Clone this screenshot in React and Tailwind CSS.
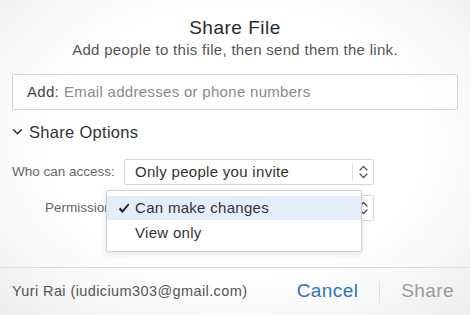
import React from "react";

function Updown({ className = "" }) {
  return (
    <svg width="9" height="14" viewBox="0 0 9 14" className={className} fill="none" stroke="#555" strokeWidth="1.2" strokeLinecap="round" strokeLinejoin="round">
      <path d="M1 5 L4.5 1.5 L8 5" />
      <path d="M1 9 L4.5 12.5 L8 9" />
    </svg>
  );
}

export default function App() {
  return (
    <div
      className="w-[470px] h-[315px] overflow-hidden flex flex-col text-[#333] tracking-[0.3px]"
      style={{
        fontFamily: '"Liberation Sans", Arial, sans-serif',
        background: "radial-gradient(ellipse 75% 80% at 50% 45%, #ffffff 55%, #ececec 100%)",
      }}
    >
      <div className="flex-1 flex flex-col px-3">
        <div className="text-center text-[19px] leading-none mt-[18px] tracking-[0.5px] text-[#2b2b2b]">Share File</div>
        <div className="text-center text-[15px] leading-none mt-[5px] text-[#555]">
          Add people to this file, then send them the link.
        </div>
        <div className="mt-[17px] h-[36px] border border-[#d2d2d2] rounded-[2px] bg-white/60 flex items-center px-[14px] text-[15px]">
          <span className="text-[#444]">Add:</span>
          <span className="ml-[5px] text-[#8a8a8a]">Email addresses or phone numbers</span>
        </div>
        <div className="mt-[12px] flex items-center h-[20px]">
          <svg width="11" height="8" viewBox="0 0 11 8" fill="none" stroke="#333" strokeWidth="1.5" strokeLinecap="round" strokeLinejoin="round">
            <path d="M1.5 1.8 L5.5 5.8 L9.5 1.8" />
          </svg>
          <span className="ml-[6px] text-[16.5px] text-[#333]">Share Options</span>
        </div>
        <div className="mt-[17px] flex items-center">
          <span className="w-[112px] text-[13.5px] text-[#666] tracking-[0px]">Who can access:</span>
          <div className="w-[250px] h-[26px] border border-[#d6d6d6] rounded-[2px] bg-white flex items-center">
            <span className="flex-1 pl-[10px] text-[15px] text-[#333]">Only people you invite</span>
            <div className="w-px h-[16px] bg-[#ddd]" />
            <div className="w-[20px] flex justify-center">
              <Updown />
            </div>
          </div>
        </div>
        <div className="relative mt-[10px] flex items-center">
          <span className="w-[112px] pl-[33px] text-[13.5px] text-[#666] whitespace-nowrap overflow-visible tracking-[0px]">Permissions:</span>
          <div className="w-[250px] h-[26px] border border-[#d6d6d6] rounded-[2px] bg-white flex items-center justify-end">
            <div className="w-px h-[16px] bg-[#ddd]" />
            <div className="w-[20px] flex justify-center">
              <Updown />
            </div>
          </div>
          <div className="absolute left-[94px] top-[-5px] w-[256px] h-[62px] bg-white border border-[#d0d0d0] rounded-[2px] shadow-[0_2px_6px_rgba(0,0,0,0.12)] pt-[5px]">
            <div className="h-[24px] bg-[#e4eefa] flex items-center">
              <span className="w-[28px] flex justify-center pl-[6px]">
                <svg width="12" height="11" viewBox="0 0 12 11" fill="#222">
                  <path d="M0.8 6.2 L2.4 4.6 L4.4 7 L10.2 0.6 L11.4 1.8 L4.4 10 Z" />
                </svg>
              </span>
              <span className="text-[15px] text-[#333]">Can make changes</span>
            </div>
            <div className="h-[26px] flex items-center pl-[28px] text-[15px] text-[#333]">View only</div>
          </div>
        </div>
      </div>
      <div className="h-[48px] border-t border-[#dcdcdc] flex items-center pl-3 pr-[16px]">
        <span className="flex-1 text-[14.5px] text-[#555] tracking-[0.4px]">Yuri Rai (iudicium303@gmail.com)</span>
        <span className="text-[19px] text-[#2f73c2] tracking-[0.4px]">Cancel</span>
        <div className="w-px h-[22px] bg-[#e0e0e0] mx-[21px]" />
        <span className="text-[19px] text-[#9a9a9a] tracking-[0.4px]">Share</span>
      </div>
    </div>
  );
}
